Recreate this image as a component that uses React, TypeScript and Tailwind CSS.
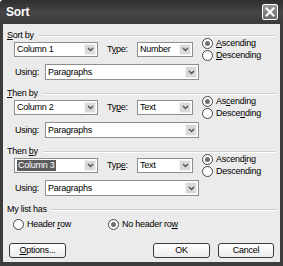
import React from "react";

function Chevron() {
  return (
    <svg width="7" height="5" viewBox="0 0 7 5">
      <path d="M1 1 L3.5 3.5 L6 1" fill="none" stroke="#555" strokeWidth="1.5" />
    </svg>
  );
}

function Combo({ w, text, selected }: { w: string; text: string; selected?: boolean }) {
  return (
    <div className={`flex h-[15px] items-stretch border border-[#8e8e8e] bg-white ${w}`}>
      <div className="flex flex-1 items-center overflow-hidden pl-[2px]">
        <span className={selected ? "bg-[#5c5c5c] px-[1px] leading-[11px] text-white" : "leading-[11px]"}>{text}</span>
      </div>
      <div className="m-[1px] flex w-[12px] items-center justify-center rounded-[1px] border border-[#f2f2f2] bg-[#d9d9d9]">
        <Chevron />
      </div>
    </div>
  );
}

function Radio({ checked, children }: { checked?: boolean; children: React.ReactNode }) {
  return (
    <div className="flex h-[12px] items-center">
      <span className="flex h-[11px] w-[11px] items-center justify-center rounded-full border border-[#444] bg-white">
        {checked && <span className="h-[5px] w-[5px] rounded-full bg-[#707070]" />}
      </span>
      <span className="ml-[3px] leading-[11px]">{children}</span>
    </div>
  );
}

function U({ children }: { children: React.ReactNode }) {
  return <span className="underline underline-offset-1">{children}</span>;
}

function GroupLabel({ children }: { children: React.ReactNode }) {
  return (
    <div className="flex h-[11px] items-center">
      <span className="leading-[11px]">{children}</span>
      <div className="ml-[5px] h-0 flex-1 border-t border-b border-t-[#cdcdcd] border-b-white" />
    </div>
  );
}

function Group({
  label,
  col,
  type,
  typeLabel,
  asc,
  desc,
  selected,
  mt,
}: {
  label: React.ReactNode;
  col: string;
  type: string;
  typeLabel: React.ReactNode;
  asc: React.ReactNode;
  desc: React.ReactNode;
  selected?: boolean;
  mt: string;
}) {
  return (
    <div className={`flex flex-col ${mt}`}>
      <GroupLabel>{label}</GroupLabel>
      <div className="ml-[7px] mt-[1px] flex h-[15px] items-center">
        <Combo w="w-[84px]" text={col} selected={selected} />
        <span className="ml-[9px] w-[30px] leading-[11px]">{typeLabel}</span>
        <Combo w="w-[56px]" text={type} />
        <div className="ml-[9px] flex flex-col">
          <Radio checked>{asc}</Radio>
          <Radio>{desc}</Radio>
        </div>
      </div>
      <div className="ml-[8px] mt-[7px] flex h-[16px] items-center">
        <span className="w-[30px] leading-[11px]">Using:</span>
        <div className="flex h-[16px]">
          <Combo w="w-[154px] !h-[16px]" text="Paragraphs" />
        </div>
      </div>
    </div>
  );
}

function Button({ w, children }: { w: string; children: React.ReactNode }) {
  return (
    <div
      className={`flex h-[15px] items-center justify-center rounded-[3px] border border-[#3a3a3a] bg-gradient-to-b from-white to-[#ececec] leading-[11px] ${w}`}
    >
      {children}
    </div>
  );
}

export default function App() {
  return (
    <div className="flex h-[266px] w-[283px] flex-col overflow-hidden rounded-tl-[4px] bg-[#3d3d3d] font-['Liberation_Sans',Arial,sans-serif] text-[9px] tracking-[-0.25px] text-black">
      <div className="flex h-[24px] items-center bg-gradient-to-b from-[#2f2f2f] via-[#454545] to-[#3b3b3b]">
        <span className="ml-[6px] text-[12px] font-bold tracking-[-0.2px] text-white">Sort</span>
        <div className="ml-auto mr-[5px] flex h-[16px] w-[16px] items-center justify-center rounded-[2px] border border-white bg-gradient-to-b from-[#9a9a9a] to-[#6c6c6c]">
          <svg width="10" height="10" viewBox="0 0 10 10">
            <path d="M1.5 1.5 L8.5 8.5 M8.5 1.5 L1.5 8.5" stroke="white" strokeWidth="2" strokeLinecap="square" />
          </svg>
        </div>
      </div>
      <div className="mx-[3px] mb-[4px] flex flex-1 flex-col bg-[#ebebeb] px-[4px] pt-[6px]">
        <Group
          mt="mt-0"
          label={<><U>S</U>ort by</>}
          col="Column 1"
          type="Number"
          typeLabel={<>T<U>y</U>pe:</>}
          asc={<><U>A</U>scending</>}
          desc={<><U>D</U>escending</>}
        />
        <Group
          mt="mt-[8px]"
          label={<><U>T</U>hen by</>}
          col="Column 2"
          type="Text"
          typeLabel={<>Ty<U>p</U>e:</>}
          asc={<>As<U>c</U>ending</>}
          desc={<>Desce<U>n</U>ding</>}
        />
        <Group
          mt="mt-[8px]"
          label={<>Then <U>b</U>y</>}
          col="Column 3"
          selected
          type="Text"
          typeLabel={<>Typ<U>e</U>:</>}
          asc={<>Ascend<U>i</U>ng</>}
          desc={<>Descendin<U>g</U></>}
        />
        <div className="mt-[8px]">
          <GroupLabel>My list has</GroupLabel>
        </div>
        <div className="ml-[6px] mt-[3px] flex">
          <div className="w-[95px]">
            <Radio>Header <U>r</U>ow</Radio>
          </div>
          <Radio checked>No header ro<U>w</U></Radio>
        </div>
        <div className="mt-[13px] flex pl-[2px] pr-[2px]">
          <Button w="w-[57px]"><U>O</U>ptions...</Button>
          <div className="ml-auto flex gap-[8px]">
            <Button w="w-[57px]">OK</Button>
            <Button w="w-[56px]">Cancel</Button>
          </div>
        </div>
      </div>
    </div>
  );
}
